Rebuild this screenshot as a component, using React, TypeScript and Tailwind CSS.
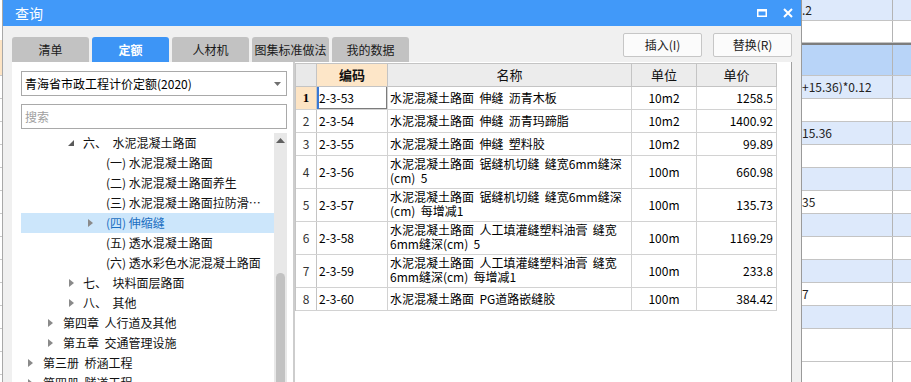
import React from "react";

type TreeItem = {
  pad: string;
  box: string;
  arrow: "open" | "closed" | "none";
  label: string;
  selected?: boolean;
};

const tree: TreeItem[] = [
  { pad: "pl-[47px]", box: "w-[15px]", arrow: "open", label: "六、  水泥混凝土路面" },
  { pad: "pl-[85px]", box: "w-0", arrow: "none", label: "(一) 水泥混凝土路面" },
  { pad: "pl-[85px]", box: "w-0", arrow: "none", label: "(二) 水泥混凝土路面养生" },
  { pad: "pl-[85px]", box: "w-0", arrow: "none", label: "(三) 水泥混凝土路面拉防滑…" },
  { pad: "pl-[67px]", box: "w-[18px]", arrow: "closed", label: "(四) 伸缩缝", selected: true },
  { pad: "pl-[85px]", box: "w-0", arrow: "none", label: "(五) 透水混凝土路面" },
  { pad: "pl-[85px]", box: "w-0", arrow: "none", label: "(六) 透水彩色水泥混凝土路面" },
  { pad: "pl-[48px]", box: "w-[14px]", arrow: "closed", label: "七、  块料面层路面" },
  { pad: "pl-[48px]", box: "w-[14px]", arrow: "closed", label: "八、  其他" },
  { pad: "pl-[27px]", box: "w-[15px]", arrow: "closed", label: "第四章  人行道及其他" },
  { pad: "pl-[27px]", box: "w-[15px]", arrow: "closed", label: "第五章  交通管理设施" },
  { pad: "pl-[7px]", box: "w-[15px]", arrow: "closed", label: "第三册  桥涵工程" },
  { pad: "pl-[7px]", box: "w-[15px]", arrow: "closed", label: "第四册  隧道工程" },
];

const rows = [
  { n: 1, code: "2-3-53", name: ["水泥混凝土路面  伸缝  沥青木板"], unit: "10m2", price: "1258.5" },
  { n: 2, code: "2-3-54", name: ["水泥混凝土路面  伸缝  沥青玛蹄脂"], unit: "10m2", price: "1400.92" },
  { n: 3, code: "2-3-55", name: ["水泥混凝土路面  伸缝  塑料胶"], unit: "10m2", price: "99.89" },
  { n: 4, code: "2-3-56", name: ["水泥混凝土路面  锯缝机切缝  缝宽6mm缝深", "(cm)  5"], unit: "100m", price: "660.98" },
  { n: 5, code: "2-3-57", name: ["水泥混凝土路面  锯缝机切缝  缝宽6mm缝深", "(cm)  每增减1"], unit: "100m", price: "135.73" },
  { n: 6, code: "2-3-58", name: ["水泥混凝土路面  人工填灌缝塑料油膏  缝宽", "6mm缝深(cm)  5"], unit: "100m", price: "1169.29" },
  { n: 7, code: "2-3-59", name: ["水泥混凝土路面  人工填灌缝塑料油膏  缝宽", "6mm缝深(cm)  每增减1"], unit: "100m", price: "233.8" },
  { n: 8, code: "2-3-60", name: ["水泥混凝土路面  PG道路嵌缝胶"], unit: "100m", price: "384.42" },
];

const bgRows = [
  { h: "h-[21px]", bg: "bg-[#dde9fb]", text: ".2" },
  { h: "h-[22px]", bg: "bg-white", text: "" },
  { h: "h-[33px]", bg: "bg-[#b8d4f8] border-t-2 border-t-[#7d7d7d]", text: "" },
  { h: "h-[23px]", bg: "bg-[#dde9fb]", text: "+15.36)*0.12" },
  { h: "h-[23px]", bg: "bg-white", text: "" },
  { h: "h-[23px]", bg: "bg-[#dde9fb]", text: "15.36" },
  { h: "h-[23px]", bg: "bg-white", text: "" },
  { h: "h-[23px]", bg: "bg-[#dde9fb]", text: "" },
  { h: "h-[23px]", bg: "bg-white", text: "35" },
  { h: "h-[23px]", bg: "bg-[#dde9fb]", text: "" },
  { h: "h-[23px]", bg: "bg-white", text: "" },
  { h: "h-[23px]", bg: "bg-[#dde9fb]", text: "" },
  { h: "h-[23px]", bg: "bg-white", text: "7" },
  { h: "h-[23px]", bg: "bg-[#dde9fb]", text: "" },
  { h: "h-[33px]", bg: "bg-white", text: "" },
  { h: "h-[23px]", bg: "bg-white", text: "" },
];

const tabs = ["清单", "定额", "人材机", "图集标准做法", "我的数据"];

function Arrow({ kind }: { kind: TreeItem["arrow"] }) {
  if (kind === "open")
    return (
      <svg width="6" height="6" viewBox="0 0 6 6">
        <polygon points="6,0 6,6 0,6" fill="#5a5a5a" />
      </svg>
    );
  if (kind === "closed")
    return (
      <svg width="5" height="8" viewBox="0 0 5 8">
        <polygon points="0,0 5,4 0,8" fill="#8a8a8a" />
      </svg>
    );
  return null;
}

export default function App() {
  return (
    <div className="w-[911px] h-[382px] overflow-hidden flex bg-white font-['Noto_Sans_CJK_SC','Noto_Sans',sans-serif] text-[12px] text-[#111]">
      {/* app behind, left edge */}
      <div className="w-[3px] shrink-0 flex flex-col border-r border-[#a8a8a8]">
        <div className="h-[40px] bg-white" />
        <div className="h-[36px] bg-[#fde4c4] border-b border-[#c8c8c8]" />
        {Array.from({ length: 13 }).map((_, i) => (
          <div key={i} className="h-[23px] border-b border-[#c8c8c8]" />
        ))}
      </div>

      {/* dialog */}
      <div className="w-[798px] shrink-0 flex flex-col bg-[#f0f0f0]">
        <div className="h-[26px] bg-[#4199f9] flex items-center justify-between pl-[12px] pr-[8px]">
          <span className="text-white text-[14px] leading-none">查询</span>
          <div className="flex items-center gap-[16px]">
            <svg width="10" height="8" viewBox="0 0 10 8">
              <rect x="0.75" y="1" width="8.5" height="6.25" fill="none" stroke="#fff" strokeWidth="1.5" />
              <rect x="0" y="0" width="10" height="2.5" fill="#fff" />
            </svg>
            <svg width="10" height="10" viewBox="0 0 10 10">
              <path d="M1 1 L9 9 M9 1 L1 9" stroke="#fff" strokeWidth="2" />
            </svg>
          </div>
        </div>

        <div className="h-[36px] flex justify-between pl-[9px] pr-[9px]">
          <div className="flex items-end gap-[3px]">
            {tabs.map((t) => (
              <div
                key={t}
                className={
                  t === "定额"
                    ? "w-[77px] h-[25px] rounded-t-[3px] bg-[#3d95f6] text-white font-bold text-[12px] flex items-center justify-center"
                    : "w-[77px] h-[25px] rounded-t-[3px] bg-[#c2c2c2] text-[#1a1a1a] text-[12px] flex items-center justify-center"
                }
              >
                {t}
              </div>
            ))}
          </div>
          <div className="flex items-start gap-[11px] pt-[7px]">
            <button className="w-[79px] h-[24px] rounded-[2px] border border-[#c6c6c6] bg-[#fbfbfb] text-[12px] text-[#222]">
              插入(I)
            </button>
            <button className="w-[79px] h-[24px] rounded-[2px] border border-[#c6c6c6] bg-[#fbfbfb] text-[12px] text-[#222]">
              替换(R)
            </button>
          </div>
        </div>

        <div className="flex-1 flex pl-[9px] pr-[9px] min-h-0">
          {/* left panel */}
          <div className="w-[281px] shrink-0 bg-white flex flex-col pl-[9px] pr-[6px] pt-[9px] overflow-hidden">
            <div className="h-[25px] border border-[#a9a9a9] flex items-center justify-between pl-[3px] pr-[5px]">
              <span className="text-[12px] text-black">青海省市政工程计价定额(2020)</span>
              <svg width="7" height="4" viewBox="0 0 7 4">
                <polygon points="0,0 7,0 3.5,4" fill="#707070" />
              </svg>
            </div>
            <div className="h-[25px] mt-[8px] border border-[#a9a9a9] flex items-center pl-[3px]">
              <span className="text-[12px] text-[#a0a0a0]">搜索</span>
            </div>
            <div className="flex mt-[4px] flex-1 min-h-0">
              <div className="flex-1 flex flex-col">
                {tree.map((it) => (
                  <div
                    key={it.label}
                    className={
                      it.selected
                        ? "h-[20px] shrink-0 flex items-center bg-[#cce6fb] text-[#1b6fc2]"
                        : "h-[20px] shrink-0 flex items-center"
                    }
                  >
                    <div className={it.pad} />
                    <div className={it.box + " flex items-center shrink-0"}>
                      <Arrow kind={it.arrow} />
                    </div>
                    <span className="whitespace-pre text-[12px]">{it.label}</span>
                  </div>
                ))}
              </div>
              <div className="w-[13px] shrink-0 bg-[#e8e8e8] flex flex-col items-center">
                <svg width="9" height="5" viewBox="0 0 9 5" className="mt-[5px]">
                  <polygon points="0,5 9,5 4.5,0" fill="#606060" />
                </svg>
                <div className="mt-[130px] w-[9px] flex-1 bg-[#c2c2c2] rounded-t-full" />
              </div>
            </div>
          </div>

          <div className="w-[2px] shrink-0 bg-[#cdcdcd]" />

          {/* right panel */}
          <div className="w-[497px] shrink-0 bg-white border-r border-[#a0a0a0] pt-[1px]">
            <div className="w-[482px] border-t border-l border-[#c4c4c4]">
              <div className="flex h-[23px] border-b border-[#c4c4c4] text-[13px]">
                <div className="w-[21px] bg-[#e9e9e9] border-r border-[#c4c4c4]" />
                <div className="w-[71px] bg-[#fde6c8] border-r border-[#c4c4c4] flex items-center justify-center font-bold">
                  编码
                </div>
                <div className="w-[244px] bg-[#ececec] border-r border-[#c4c4c4] flex items-center justify-center">
                  名称
                </div>
                <div className="w-[65px] bg-[#ececec] border-r border-[#c4c4c4] flex items-center justify-center">
                  单位
                </div>
                <div className="w-[80px] bg-[#ececec] border-r border-[#c4c4c4] flex items-center justify-center">
                  单价
                </div>
              </div>
              {rows.map((r) => {
                const tall = r.name.length > 1;
                return (
                  <div
                    key={r.n}
                    className={
                      tall
                        ? "flex h-[33px] border-b border-[#d2d2d2] text-black"
                        : "flex h-[23px] border-b border-[#d2d2d2] text-black"
                    }
                  >
                    <div
                      className={
                        r.n === 1
                          ? "w-[21px] bg-[#fde4c4] border-r border-[#c4c4c4] flex items-center justify-center font-bold font-['Liberation_Serif',serif] text-[13px]"
                          : "w-[21px] bg-white border-r border-[#c4c4c4] flex items-center justify-center text-[12px] text-[#333]"
                      }
                    >
                      {r.n}
                    </div>
                    <div
                      className={
                        r.n === 1
                          ? "w-[71px] border-r border-[#d2d2d2] flex items-center pl-[2px] shadow-[inset_2px_0_0_#3a78d4,inset_-1px_-1px_0_#7c7c7c]"
                          : "w-[71px] border-r border-[#d2d2d2] flex items-center pl-[2px]"
                      }
                    >
                      {r.code}
                    </div>
                    <div
                      className={
                        tall
                          ? "w-[244px] border-r border-[#d2d2d2] flex flex-col pl-[2px] pt-[1px] leading-[14px] overflow-hidden"
                          : "w-[244px] border-r border-[#d2d2d2] flex flex-col justify-center pl-[2px] leading-[14px] overflow-hidden"
                      }
                    >
                      {r.name.map((l) => (
                        <span key={l} className="whitespace-pre">
                          {l}
                        </span>
                      ))}
                    </div>
                    <div className="w-[65px] border-r border-[#d2d2d2] flex items-center justify-center">
                      {r.unit}
                    </div>
                    <div className="w-[80px] border-r border-[#d2d2d2] flex items-center justify-end pr-[3px]">
                      {r.price}
                    </div>
                  </div>
                );
              })}
            </div>
          </div>
        </div>
      </div>

      {/* app behind, right side */}
      <div className="flex-1 flex flex-col border-l border-[#9a9a9a]">
        {bgRows.map((r, i) => (
          <div key={i} className={"flex shrink-0 border-b border-[#c4c4c4] " + r.h + " " + r.bg}>
            <div className="w-[91px] border-r border-[#b4b4b4] flex items-center overflow-hidden whitespace-nowrap text-[12px] text-[#222]">
              {r.text}
            </div>
            <div className="flex-1" />
          </div>
        ))}
      </div>
    </div>
  );
}
